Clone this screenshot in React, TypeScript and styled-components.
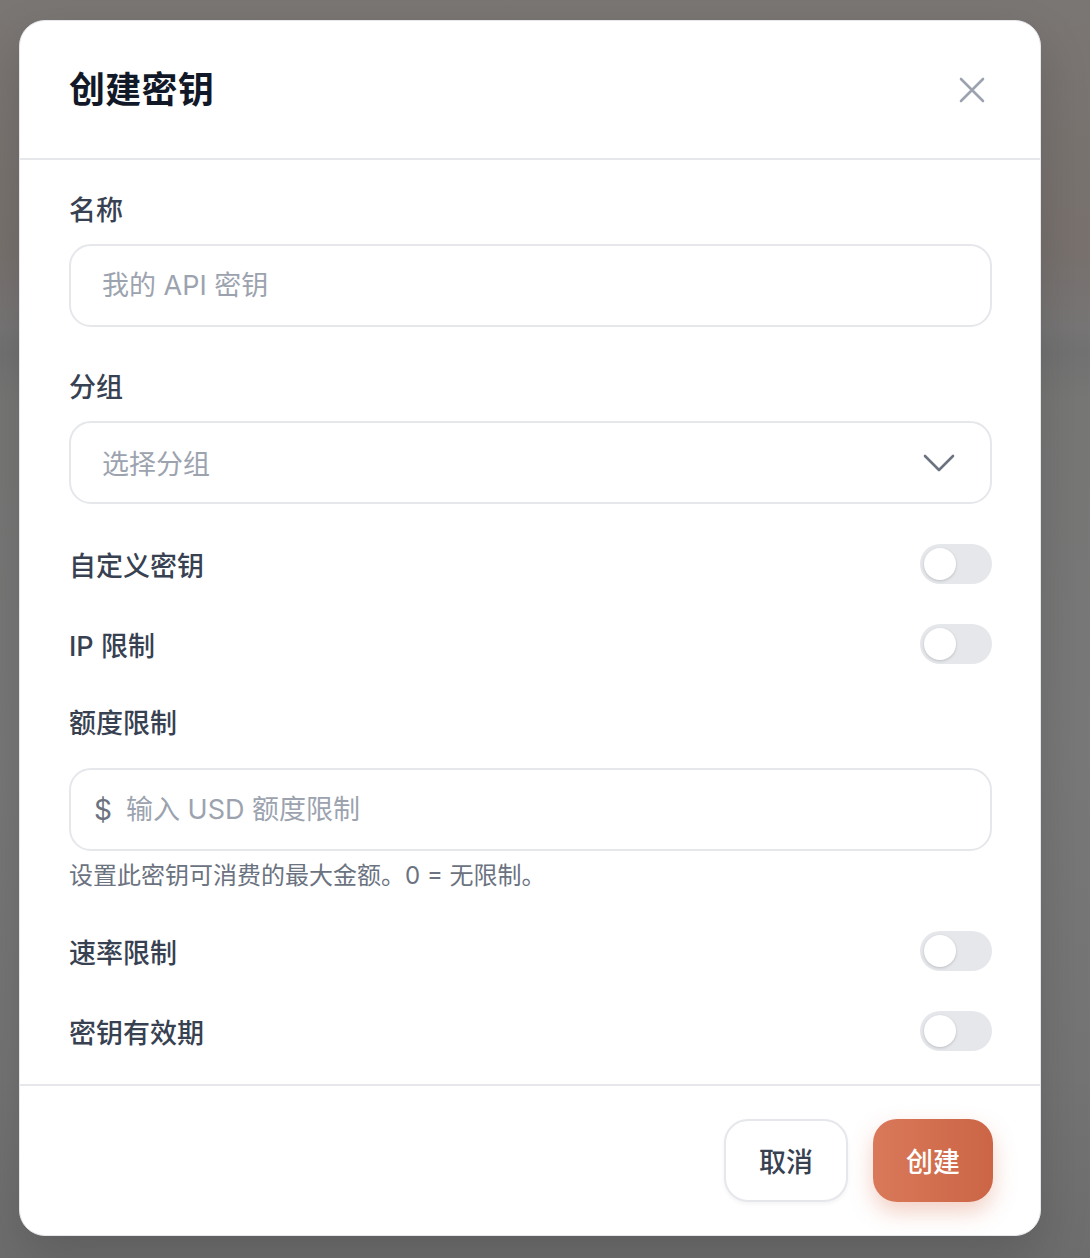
import React, { useState } from 'react'
import styled, { createGlobalStyle } from 'styled-components'

const GlobalStyle = createGlobalStyle`
  html, body {
    margin: 0;
    padding: 0;
  }
  body {
    font-family: Inter, "Noto Sans CJK SC", "Noto Sans", sans-serif;
    -webkit-font-smoothing: antialiased;
  }
  * { box-sizing: border-box; }
`

const Backdrop = styled.div`
  width: 1090px;
  height: 1258px;
  padding: 20px 0 0 19px;
  background: linear-gradient(
    180deg,
    #7a7674 0%,
    #797370 12%,
    #78716e 20%,
    #777575 26%,
    #727272 28%,
    #777776 32%,
    #787878 60%,
    #747474 85%,
    #6d6d6d 100%
  );
`

const Modal = styled.div`
  width: 1022px;
  height: 1216px;
  background: #fff;
  border: 1px solid #e5e7eb;
  border-radius: 26px;
  display: flex;
  flex-direction: column;
  overflow: hidden;
  box-shadow: 0 20px 50px rgba(0, 0, 0, 0.15);
`

const Header = styled.div`
  height: 139px;
  flex-shrink: 0;
  display: flex;
  align-items: center;
  justify-content: space-between;
  padding: 0 46px 0 49px;
  border-bottom: 2px solid #e5e7eb;
`

const Title = styled.h2`
  margin: 0;
  font-size: 36px;
  font-weight: 700;
  color: #111827;
  line-height: 48px;
  letter-spacing: 0.3px;
`

const CloseButton = styled.button`
  width: 44px;
  height: 44px;
  padding: 0;
  border: none;
  background: none;
  display: flex;
  align-items: center;
  justify-content: center;
  cursor: pointer;
`

const Body = styled.div`
  flex: 1;
  display: flex;
  flex-direction: column;
  padding: 35px 48px 0 49px;
  border-bottom: 2px solid #e5e7eb;
`

const Label = styled.label<{ $gap: number; $top?: number }>`
  display: block;
  font-size: 27px;
  line-height: 32px;
  font-weight: 500;
  color: #374151;
  margin-top: ${p => p.$top ?? 0}px;
  margin-bottom: ${p => p.$gap}px;
`

const InputBox = styled.div`
  height: 83px;
  display: flex;
  align-items: center;
  gap: 16px;
  padding: 0 35px 0 31px;
  border: 2px solid #e5e7eb;
  border-radius: 22px;
  background: #fff;
`

const TextInput = styled.input`
  flex: 1;
  border: none;
  outline: none;
  padding: 0;
  font-family: inherit;
  font-size: 27px;
  color: #111827;
  background: transparent;
  &::placeholder {
    color: #9ca3af;
  }
`

const Placeholder = styled.span`
  flex: 1;
  font-size: 27px;
  color: #9ca3af;
`

const Prefix = styled.span`
  font-size: 28px;
  color: #6b7280;
  margin-left: -8px;
  margin-right: -2px;
`

const ToggleRow = styled.div<{ $top: number }>`
  height: 40px;
  margin-top: ${p => p.$top}px;
  display: flex;
  align-items: center;
  justify-content: space-between;
`

const RowLabel = styled.span`
  font-size: 27px;
  font-weight: 500;
  color: #374151;
`

const Track = styled.button<{ $on: boolean }>`
  position: relative;
  width: 72px;
  height: 40px;
  padding: 0;
  border: none;
  border-radius: 20px;
  background: ${p => (p.$on ? '#d4704f' : '#e5e7eb')};
  cursor: pointer;
`

const Knob = styled.span<{ $on: boolean }>`
  position: absolute;
  top: 4px;
  left: ${p => (p.$on ? 36 : 4)}px;
  width: 32px;
  height: 32px;
  border-radius: 50%;
  background: #fff;
  box-shadow: 0 1px 3px rgba(0, 0, 0, 0.18);
`

const Help = styled.p`
  margin: 10px 0 0;
  font-size: 24px;
  line-height: 30px;
  color: #6b7280;
`

const Footer = styled.div`
  flex-shrink: 0;
  height: 149px;
  display: flex;
  align-items: center;
  justify-content: flex-end;
  gap: 25px;
  padding: 0 47px 0 0;
`

const Button = styled.button<{ $primary?: boolean }>`
  height: 83px;
  padding: 0 33px;
  border-radius: 24px;
  font-family: inherit;
  font-size: 27px;
  font-weight: 500;
  cursor: pointer;
  border: ${p => (p.$primary ? 'none' : '2px solid #e5e7eb')};
  color: ${p => (p.$primary ? '#fff' : '#374151')};
  background: ${p =>
    p.$primary ? 'linear-gradient(90deg, #d97959 0%, #cb6546 100%)' : '#fff'};
  box-shadow: ${p =>
    p.$primary ? '0 10px 22px rgba(217, 120, 90, 0.35)' : '0 2px 4px rgba(0,0,0,0.05)'};
`

function Toggle() {
  const [on, setOn] = useState(false)
  return (
    <Track $on={on} onClick={() => setOn(!on)}>
      <Knob $on={on} />
    </Track>
  )
}

export default function App() {
  return (
    <>
      <GlobalStyle />
      <Backdrop>
        <Modal>
          <Header>
            <Title>创建密钥</Title>
            <CloseButton aria-label="close">
              <svg width="26" height="26" viewBox="0 0 26 26" fill="none">
                <path d="M2 2L24 24M24 2L2 24" stroke="#9ca3af" strokeWidth="2.6" strokeLinecap="round" />
              </svg>
            </CloseButton>
          </Header>

          <Body>
            <Label $gap={17}>名称</Label>
            <InputBox>
              <TextInput placeholder="我的 API 密钥" />
            </InputBox>

            <Label $gap={17} $top={45}>分组</Label>
            <InputBox>
              <Placeholder>选择分组</Placeholder>
              <svg width="32" height="18" viewBox="0 0 32 18" fill="none">
                <path d="M2 2L16 16L30 2" stroke="#6b7280" strokeWidth="2.6" strokeLinecap="round" strokeLinejoin="round" />
              </svg>
            </InputBox>

            <ToggleRow $top={40}>
              <RowLabel>自定义密钥</RowLabel>
              <Toggle />
            </ToggleRow>

            <ToggleRow $top={40}>
              <RowLabel>IP 限制</RowLabel>
              <Toggle />
            </ToggleRow>

            <Label $gap={28} $top={44}>额度限制</Label>
            <InputBox>
              <Prefix>$</Prefix>
              <TextInput placeholder="输入 USD 额度限制" />
            </InputBox>
            <Help>设置此密钥可消费的最大金额。0 = 无限制。</Help>

            <ToggleRow $top={40}>
              <RowLabel>速率限制</RowLabel>
              <Toggle />
            </ToggleRow>

            <ToggleRow $top={40}>
              <RowLabel>密钥有效期</RowLabel>
              <Toggle />
            </ToggleRow>
          </Body>

          <Footer>
            <Button>取消</Button>
            <Button $primary>创建</Button>
          </Footer>
        </Modal>
      </Backdrop>
    </>
  )
}
